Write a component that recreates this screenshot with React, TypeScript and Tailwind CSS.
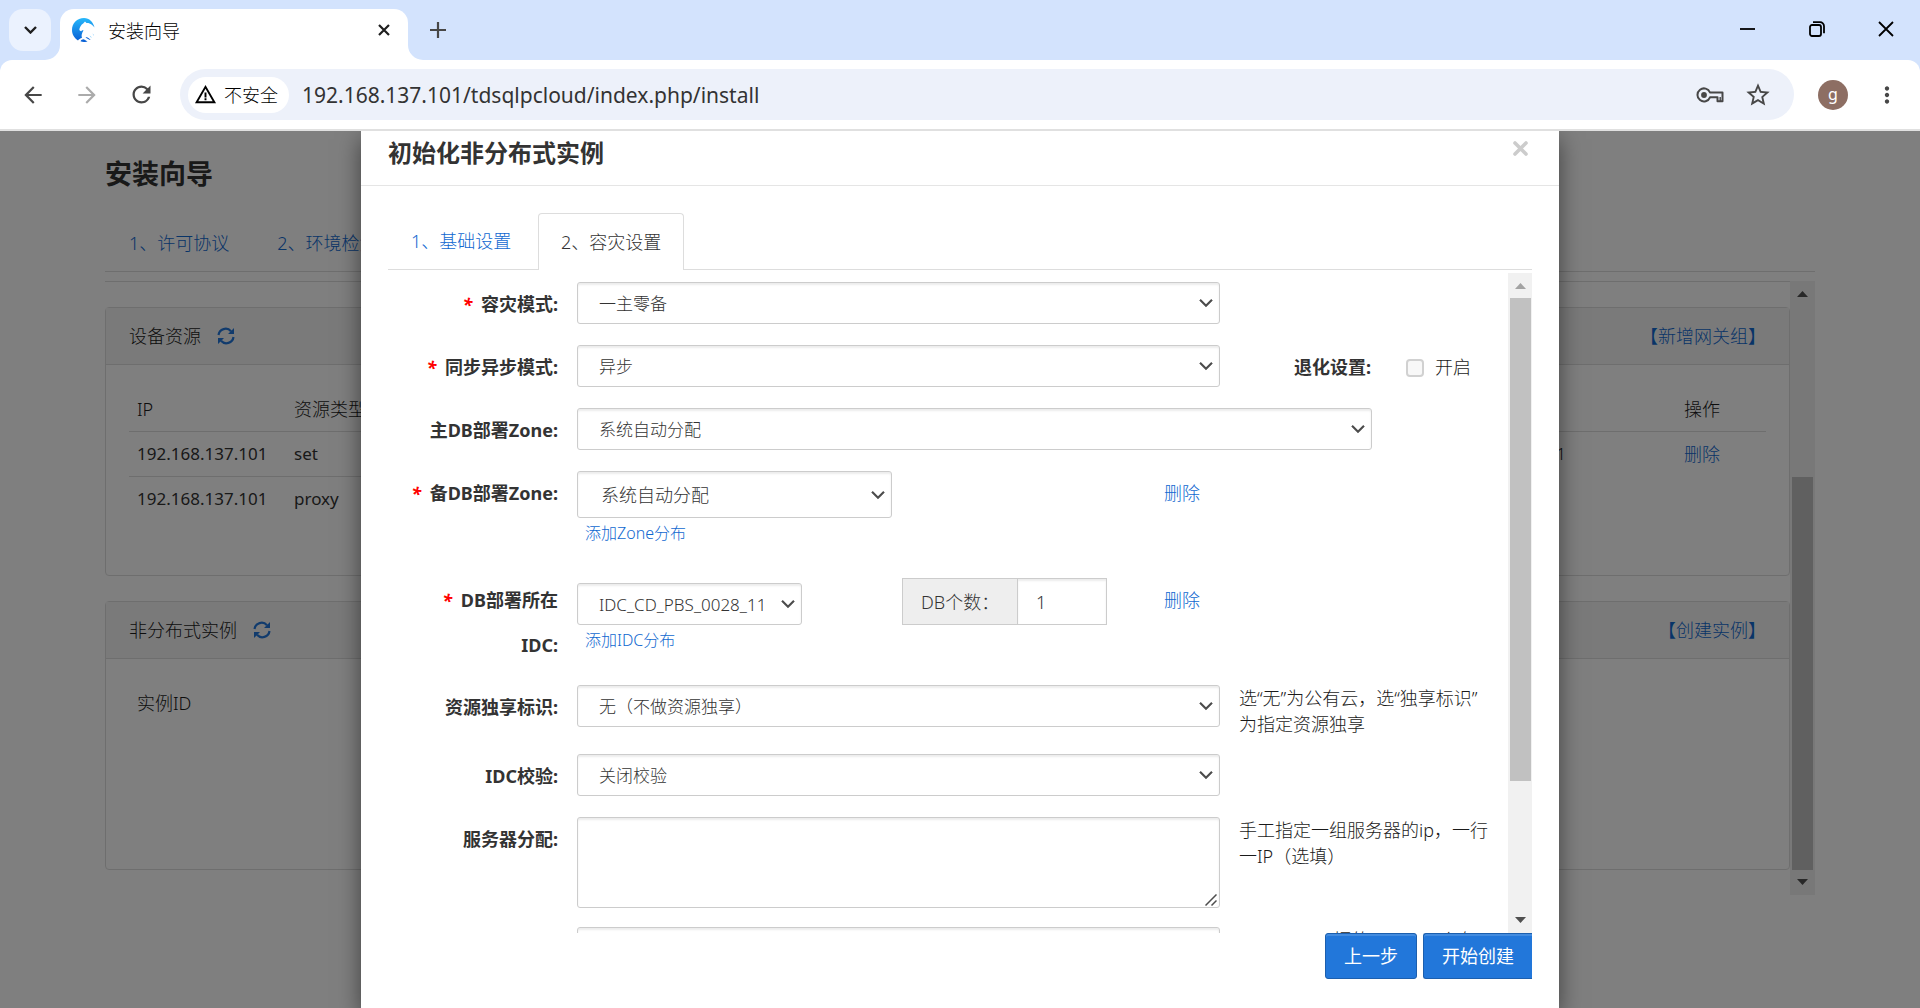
import React from 'react'
import { MdArrowBack, MdArrowForward, MdMoreVert, MdRefresh, MdStarOutline, MdWarningAmber } from 'react-icons/md'

const Favicon = () => (
  <svg className="size-6" viewBox="0 0 24 24">
    <defs>
      <linearGradient id="fav" x1="0" y1="0" x2="0" y2="1">
        <stop offset="0" stopColor="#27b8fb" />
        <stop offset="1" stopColor="#0a62d6" />
      </linearGradient>
    </defs>
    <path
      fill="url(#fav)"
      d="M12 0C5 0 0 5.400 0 12c0 4.500 2.400 8.300 6 10.400 1-1 2.200-2 4-2.600C9 17.500 10 15 11.500 12.500c-1-.4-1.800 0-2.300.8C8.300 13 7 12.500 7.400 11c.6-1.900 1.700-4.300 3.800-5.400L13 3.500l1.500 1.500C18 4.500 21 7.500 22.500 9.500 21 4 17.500 0 12 0z"
    />
    <path fill="#0a62d6" d="M8.500 23.200c1.200-1.900 3-2.600 4.500-1.200l2.500 1.600c-2.400.7-5 .5-7-.4zM13.500 19c2 .2 4 1.500 5.200 3-1.500-.3-3.800-1.200-5.200-3z" />
    <path fill="#8fd0fb" d="M20.500 15.500c1 .6 1.500 1.500 1.400 2.500-.6-.7-1.100-1.500-1.400-2.500zM17.500 17.500c1.200.5 2 1.500 2.300 2.600-1-.6-1.800-1.500-2.300-2.600z" />
  </svg>
)

const KeyIcon = () => (
  <svg className="h-4 w-7" viewBox="0 0 28 16" fill="none">
    <path
      d="M14 5.500h12.500v8.800h-5v-4H14A6.500 6.500 0 1 1 14 5.500z"
      stroke="currentColor"
      strokeWidth="2"
      strokeLinejoin="round"
    />
    <path d="M24.200 10v4" stroke="currentColor" strokeWidth="1.400" />
    <circle cx="8" cy="8" r="2.900" fill="currentColor" />
  </svg>
)

const RefreshIcon = () => (
  <svg className="size-[18px] text-[#2277da]" viewBox="0 0 18 18" fill="none">
    <path d="M1.500 8A7.200 7.200 0 0 1 14 4.200M16.500 10A7.200 7.200 0 0 1 4 13.800" stroke="currentColor" strokeWidth="2.200" />
    <path d="M17 1v6h-6zM1 17v-6h6z" fill="currentColor" />
  </svg>
)

const Chevron = () => (
  <svg className="pointer-events-none absolute right-[7px] top-1/2 h-[9px] w-[14px] -translate-y-1/2" viewBox="0 0 14 9" fill="none">
    <path d="M1 1.200l6 6 6-6" stroke="#4d4d4d" strokeWidth="2.200" />
  </svg>
)

const BrowserBar = () => (
  <header className="bg-[#d3e3fd] font-['Noto_Sans','Noto_Sans_CJK_SC',sans-serif]">
    <div className="flex h-[60px] items-start pt-[9px]">
      <button aria-label="搜索标签页" className="ml-[9px] flex size-[42px] items-center justify-center rounded-[14px] bg-[#ebf2fe]">
        <svg className="h-2 w-[13px]" viewBox="0 0 13 8" fill="none">
          <path d="M1 1l5.500 5.500L12 1" stroke="#1f1f1f" strokeWidth="2.400" />
        </svg>
      </button>
      <div className="relative ml-[9px] flex h-[51px] w-[348px] items-center rounded-t-[14px] bg-white pb-[9px] pl-3 pr-[18px]">
        <svg className="absolute -left-[15px] bottom-0 size-[15px]" viewBox="0 0 15 15">
          <path d="M15 0v15H0A15 15 0 0 0 15 0z" fill="#fff" />
        </svg>
        <svg className="absolute -right-[15px] bottom-0 size-[15px]" viewBox="0 0 15 15">
          <path d="M0 0v15h15A15 15 0 0 1 0 0z" fill="#fff" />
        </svg>
        <Favicon />
        <span className="ml-3 flex-1 pt-0.5 text-lg font-light leading-6 text-black">安装向导</span>
        <button aria-label="关闭标签页">
          <svg className="size-3" viewBox="0 0 12 12">
            <path d="M1 1l10 10M11 1L1 11" stroke="#1f1f1f" strokeWidth="2.200" />
          </svg>
        </button>
      </div>
      <button aria-label="新标签页" className="ml-[22px] mt-[13px]">
        <svg className="size-4" viewBox="0 0 16 16">
          <path d="M8 0v16M0 8h16" stroke="#474747" strokeWidth="2.200" />
        </svg>
      </button>
      <div className="ml-auto mr-[26px] mt-3 flex gap-[53px]">
        <button aria-label="最小化">
          <svg className="size-4" viewBox="0 0 16 16">
            <path d="M0 8h15" stroke="#000" strokeWidth="1.800" />
          </svg>
        </button>
        <button aria-label="还原">
          <svg className="size-4" viewBox="0 0 16 16" fill="none" stroke="#000" strokeWidth="1.800">
            <rect x="1" y="4" width="11" height="11" rx="2" />
            <path d="M4 1.200h7a4 4 0 0 1 4 4v7" />
          </svg>
        </button>
        <button aria-label="关闭">
          <svg className="size-4" viewBox="0 0 16 16">
            <path d="M1 1l14 14M15 1L1 15" stroke="#000" strokeWidth="1.800" />
          </svg>
        </button>
      </div>
    </div>
    <div className="flex h-[71px] items-center rounded-t-[12px] border-b-2 border-[#e0e0e0] bg-white pr-5 text-[#474747]">
      <div className="ml-5 flex gap-7">
        <button aria-label="后退"><MdArrowBack size={26} /></button>
        <button aria-label="前进" className="text-[#ababab]"><MdArrowForward size={26} /></button>
        <button aria-label="重新加载"><MdRefresh size={27} /></button>
      </div>
      <div className="ml-[25px] flex h-[51px] flex-1 items-center rounded-full bg-[#edf1fa] pl-2 pr-[22px]">
        <button className="flex h-9 items-center gap-[7px] rounded-full bg-white pl-1.5 pr-[11px] text-lg font-light text-black">
          <MdWarningAmber size={23} />
          不安全
        </button>
        <input
          aria-label="地址"
          className="ml-[13px] h-[36px] min-w-0 flex-1 bg-transparent text-[21px] text-[#333] outline-none"
          defaultValue="192.168.137.101/tdsqlpcloud/index.php/install"
        />
        <KeyIcon />
        <MdStarOutline size={28} className="ml-5" />
      </div>
      <button aria-label="个人资料" className="ml-6 flex size-[30px] items-center justify-center rounded-full bg-[#8d6e63] pb-0.5 text-base leading-none text-white">
        g
      </button>
      <button aria-label="更多" className="ml-[26px]"><MdMoreVert size={26} /></button>
    </div>
  </header>
)

const Triangle = ({ down = false, color }: { down?: boolean; color: string }) => (
  <svg className="h-[6px] w-[11px]" viewBox="0 0 11 6">
    <path d={down ? 'M0 0h11L5.500 6z' : 'M0 6h11L5.500 0z'} fill={color} />
  </svg>
)

interface PanelProps {
  title: string
  action: string
  children: React.ReactNode
}

const Panel: React.FC<PanelProps> = ({ title, action, children }) => (
  <section className="h-[269px] rounded-[4px] border border-[#ddd]">
    <div className="flex h-[57px] items-center border-b border-[#ddd] bg-[#f5f5f5] px-[23px]">
      <h2>{title}</h2>
      <button aria-label="刷新" className="ml-4"><RefreshIcon /></button>
      <a href="#" className="ml-auto text-[#1068d0]">{action}</a>
    </div>
    <div className="flex gap-6 px-[23px] pt-[22px] leading-[44px]">{children}</div>
  </section>
)

const InstallPage = () => (
  <div className="px-[105px] pt-[24px] text-lg text-[#1a1a1a]">
    <h1 className="text-[27px] font-bold leading-[38px] text-[#333]">安装向导</h1>
    <nav className="mt-[17px] flex h-[62px] items-center border-b border-[#ddd] pt-1">
      <a href="#" className="px-6 text-[#1068d0]">1、许可协议</a>
      <a href="#" className="px-6 text-[#1068d0]">2、环境检测</a>
    </nav>
    <div className="mt-[9px] flex">
      <div className="flex h-[614px] flex-1 flex-col gap-[25px] border-t border-[#ddd] pt-[25px]">
        <Panel title="设备资源" action="【新增网关组】">
          <table className="flex-1 text-left">
            <thead>
              <tr className="border-b border-[#ddd]">
                <th className="w-[157px] pl-2 font-light">IP</th>
                <th className="pl-2 font-light">资源类型</th>
              </tr>
            </thead>
            <tbody className="text-[17px] font-normal text-[#333]">
              <tr className="border-b border-[#ddd]">
                <td className="pl-2">192.168.137.101</td>
                <td className="pl-2">set</td>
              </tr>
              <tr>
                <td className="pl-2">192.168.137.101</td>
                <td className="pl-2">proxy</td>
              </tr>
            </tbody>
          </table>
          <table className="mb-auto flex-1 text-left">
            <thead>
              <tr className="border-b border-[#ddd]">
                <th className="pl-2 font-light">IP</th>
                <th className="w-[90px] pl-2 font-light">操作</th>
              </tr>
            </thead>
            <tbody>
              <tr>
                <td className="pr-[110px] text-right text-[17px]">192.168.137.101</td>
                <td className="pl-2"><a href="#" className="text-[#1068d0]">删除</a></td>
              </tr>
            </tbody>
          </table>
        </Panel>
        <Panel title="非分布式实例" action="【创建实例】">
          <table className="text-left">
            <thead>
              <tr>
                <th className="pl-2 font-light">实例ID</th>
              </tr>
            </thead>
          </table>
        </Panel>
      </div>
      <div className="flex h-[614px] w-[25px] flex-col items-center bg-[#f1f1f1] py-[10px]">
        <Triangle color="#505050" />
        <div className="mt-[180px] w-[21px] flex-1 bg-[#c1c1c1]" />
        <div className="mt-[9px] flex"><Triangle down color="#505050" /></div>
      </div>
    </div>
  </div>
)

interface FieldLabelProps {
  htmlFor: string
  required?: boolean
  children: React.ReactNode
}

const FieldLabel: React.FC<FieldLabelProps> = ({ htmlFor, required, children }) => (
  <label htmlFor={htmlFor} className="text-right font-bold leading-[45px] text-[#333]">
    {required && <i className="mr-1 text-[#f00]">* </i>}
    {children}
  </label>
)

interface SelectBoxProps {
  id: string
  value: string
  className?: string
}

const SelectBox: React.FC<SelectBoxProps> = ({ id, value, className = 'h-[42px] pl-[21px] pt-0.5 text-[17px]' }) => (
  <div className="relative text-[#333]">
    <select
      id={id}
      className={`block w-full appearance-none rounded-[3px] border border-[#ccc] bg-white pr-[38px] shadow-[inset_0_2px_2px_rgba(0,0,0,0.075)] ${className}`}
    >
      <option>{value}</option>
    </select>
    <Chevron />
  </div>
)

const InstanceDialog = () => (
  <div
    role="dialog"
    aria-labelledby="dialog-title"
    className="mx-auto flex h-full w-full max-w-[1198px] flex-col bg-white text-lg text-[#1a1a1a] shadow-[0_8px_22px_rgba(0,0,0,0.5)]"
  >
    <div className="flex h-[55px] items-start justify-between border-b border-[#e5e5e5] px-[27px]">
      <h2 id="dialog-title" className="pt-1 text-2xl font-bold leading-9 text-[#333]">初始化非分布式实例</h2>
      <button aria-label="关闭" className="mr-1 mt-[10px]">
        <svg className="size-[15px]" viewBox="0 0 15 15">
          <path d="M2 2l11 11M13 2L2 13" stroke="#ccc" strokeWidth="3.600" strokeLinecap="round" />
        </svg>
      </button>
    </div>

    <div className="mx-[27px] mt-[27px] flex h-[57px] border-b border-[#ddd]">
      <button className="w-[150px] pl-[23px] text-left text-[#1068d0]">1、基础设置</button>
      <button className="-mb-px rounded-t-[4px] border border-b-0 border-[#ddd] bg-white px-[22px] text-[#333]">2、容灾设置</button>
    </div>

    <div className="mx-[27px] mt-[3px] flex h-[660px]">
      <form className="min-w-0 flex-1 overflow-hidden pt-[9px]">
        <div className="grid grid-cols-[170px_minmax(0,1fr)_269px] items-start gap-x-[19px]">
          <FieldLabel htmlFor="mode" required>容灾模式:</FieldLabel>
          <div className="h-[63px]"><SelectBox id="mode" value="一主零备" /></div>
          <div />

          <FieldLabel htmlFor="sync" required>同步异步模式:</FieldLabel>
          <div className="h-[63px]"><SelectBox id="sync" value="异步" /></div>
          <div className="flex items-center leading-[45px]">
            <span className="w-[132px] text-right font-bold text-[#333]">退化设置:</span>
            <input
              id="degrade"
              type="checkbox"
              disabled
              className="ml-[35px] size-[18px] appearance-none rounded-[4px] border-2 border-[#d1d1d1] bg-[#f8f8f8]"
            />
            <label htmlFor="degrade" className="ml-[11px]">开启</label>
          </div>

          <FieldLabel htmlFor="master-zone">主DB部署Zone:</FieldLabel>
          <div className="col-span-2 h-[63px] pr-[136px]"><SelectBox id="master-zone" value="系统自动分配" /></div>

          <FieldLabel htmlFor="slave-zone" required>备DB部署Zone:</FieldLabel>
          <div className="col-span-2 grid h-[107px] grid-cols-[315px_272px_auto] items-start">
            <div>
              <SelectBox id="slave-zone" value="系统自动分配" className="h-[47px] pl-[23px] text-lg" />
              <a href="#" className="ml-2 text-base leading-[30px] text-[#1068d0]">添加Zone分布</a>
            </div>
            <div />
            <a href="#" className="leading-[45px] text-[#1068d0]">删除</a>
          </div>

          <FieldLabel htmlFor="idc" required>DB部署所在<br />IDC:</FieldLabel>
          <div className="col-span-2 grid h-[107px] grid-cols-[225px_362px_auto] items-start">
            <div className="pt-[5px]">
              <SelectBox id="idc" value="IDC_CD_PBS_0028_11" />
              <a href="#" className="ml-2 text-base leading-[30px] text-[#1068d0]">添加IDC分布</a>
            </div>
            <div className="ml-[100px] flex h-[47px] w-[205px] text-[#333]">
              <label htmlFor="db-count" className="flex flex-1 items-center border border-r-0 border-[#ccc] bg-[#eee] pl-[18px]">DB个数：</label>
              <input
                id="db-count"
                defaultValue="1"
                className="w-[90px] border border-[#ccc] pl-[18px] shadow-[inset_0_2px_2px_rgba(0,0,0,0.075)]"
              />
            </div>
            <a href="#" className="leading-[45px] text-[#1068d0]">删除</a>
          </div>

          <FieldLabel htmlFor="exclusive">资源独享标识:</FieldLabel>
          <div className="h-[69px]"><SelectBox id="exclusive" value="无（不做资源独享）" /></div>
          <p className="pr-[14px] leading-[26px]">选“无”为公有云，选“独享标识”<br />为指定资源独享</p>

          <FieldLabel htmlFor="idc-check">IDC校验:</FieldLabel>
          <div className="h-[63px]"><SelectBox id="idc-check" value="关闭校验" /></div>
          <div />

          <FieldLabel htmlFor="servers">服务器分配:</FieldLabel>
          <div className="relative h-[110px]">
            <textarea
              id="servers"
              className="block h-[91px] w-full resize-none rounded-[3px] border border-[#ccc] shadow-[inset_0_2px_2px_rgba(0,0,0,0.075)]"
            />
            <svg className="absolute right-[3px] top-[77px] size-3" viewBox="0 0 12 12">
              <path d="M.5 11.500l11-11M6.500 11.500l5-5" stroke="#4d4d4d" strokeWidth="1.500" />
            </svg>
          </div>
          <p className="pr-[14px] leading-[26px]">手工指定一组服务器的ip，一行一IP（选填）</p>

          <div />
          <input aria-label="参数" className="h-[42px] w-full rounded-[3px] border border-[#ccc] shadow-[inset_0_2px_2px_rgba(0,0,0,0.075)]" />
          <p className="whitespace-nowrap leading-[26px]">ip,zones,vip据的ip,server个在</p>
        </div>
      </form>
      <div className="flex w-6 flex-col items-center bg-[#f1f1f1] py-[10px]">
        <Triangle color="#a3a3a3" />
        <div className="mb-[136px] mt-[9px] w-[21px] flex-1 bg-[#c1c1c1]" />
        <Triangle down color="#505050" />
      </div>
    </div>

    <div className="mx-[27px] flex justify-end gap-1.5 text-white">
      <button className="h-[46px] w-[92px] rounded-[3px] border border-[#1c5fae] bg-[#2277da] font-normal shadow-[inset_0_2px_0_rgba(255,255,255,0.15)]">上一步</button>
      <button className="h-[46px] w-[109px] rounded-l-[3px] border border-r-0 border-[#1c5fae] bg-[#2277da] font-normal shadow-[inset_0_2px_0_rgba(255,255,255,0.15)]">开始创建</button>
    </div>
  </div>
)

export default function App() {
  return (
    <div className="flex h-screen flex-col overflow-hidden bg-white">
      <BrowserBar />
      <main className="relative min-h-0 flex-1 overflow-hidden font-['Noto_Sans','Noto_Sans_CJK_SC',sans-serif] font-light">
        <InstallPage />
        <div className="absolute inset-0 bg-black/50">
          <InstanceDialog />
        </div>
      </main>
    </div>
  )
}
